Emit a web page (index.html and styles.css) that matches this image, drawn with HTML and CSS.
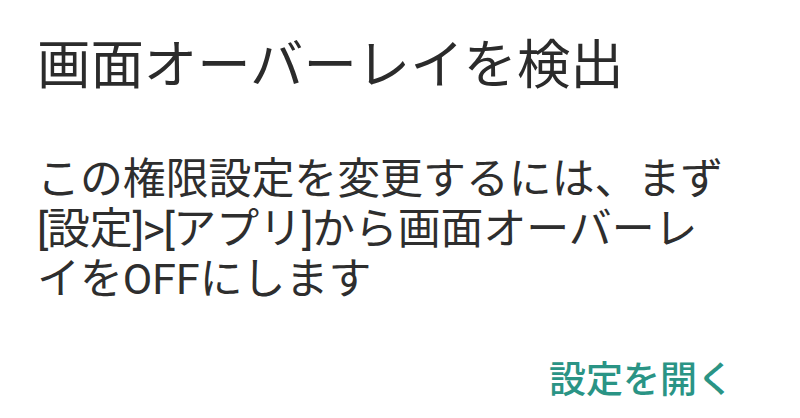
FILE: index.html
```html
<!DOCTYPE html>
<html lang="ja">
<head>
<meta charset="utf-8">
<link rel="stylesheet" href="styles.css">
</head>
<body>
<div class="dialog">
  <h1 class="title">画面オーバーレイを検出</h1>
  <p class="message">この権限設定を変更するには、まず<br><span class="sym">[</span>設定<span class="sym">]&gt;[</span>アプリ<span class="sym">]</span>から画面オーバーレ<br>イをOFFにします</p>
  <div class="actions">
    <span class="button">設定を開く</span>
  </div>
</div>
</body>
</html>
```

FILE: styles.css
```css
html, body {
  margin: 0;
  padding: 0;
  background: #ffffff;
}
body {
  width: 800px;
  height: 418px;
  overflow: hidden;
  font-family: Roboto, "Noto Sans CJK JP", sans-serif;
}
.dialog {
  display: flex;
  flex-direction: column;
  padding: 34px 0 0 37px;
}
.title {
  margin: 0;
  font-size: 53.4px;
  line-height: 64px;
  font-weight: 400;
  color: #2b2b2b;
  white-space: nowrap;
}
.message {
  margin: 56px 0 0 0;
  font-size: 42.9px;
  line-height: 50px;
  color: #2e2e2e;
  white-space: nowrap;
}
.sym {
  letter-spacing: -1.5px;
}
.actions {
  display: flex;
  justify-content: flex-end;
  margin-top: 57px;
  padding-right: 66px;
}
.button {
  font-size: 37px;
  line-height: 40px;
  color: #2a9485;
  font-weight: 500;
}
```
